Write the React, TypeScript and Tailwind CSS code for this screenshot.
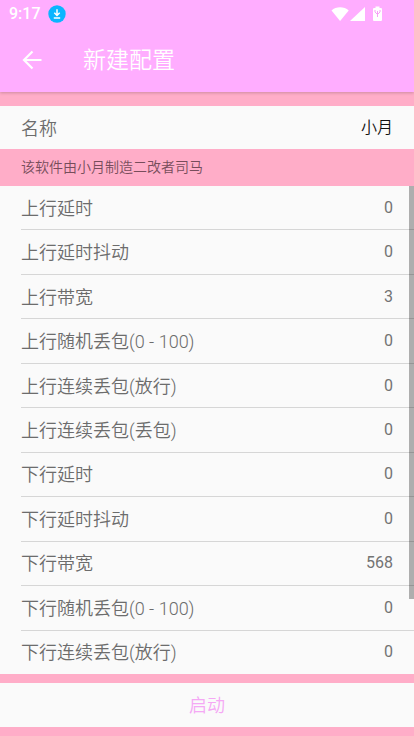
const uplinkFields = [
  { id: "up-delay", label: "上行延时", value: "0" },
  { id: "up-jitter", label: "上行延时抖动", value: "0" },
  { id: "up-bandwidth", label: "上行带宽", value: "3" },
  { id: "up-random-loss", label: "上行随机丢包(0 - 100)", value: "0" },
  { id: "up-burst-pass", label: "上行连续丢包(放行)", value: "0" },
  { id: "up-burst-drop", label: "上行连续丢包(丢包)", value: "0" },
];

const downlinkFields = [
  { id: "down-delay", label: "下行延时", value: "0" },
  { id: "down-jitter", label: "下行延时抖动", value: "0" },
  { id: "down-bandwidth", label: "下行带宽", value: "568" },
  { id: "down-random-loss", label: "下行随机丢包(0 - 100)", value: "0" },
  { id: "down-burst-pass", label: "下行连续丢包(放行)", value: "0" },
];

function StatusBar() {
  return (
    <div className="flex h-7 items-center pl-[9px] pr-8 text-white">
      <span className="text-base font-medium leading-7">9:17</span>
      <svg className="ml-[7px] h-[18px] w-[18px]" viewBox="0 0 18 18" aria-hidden="true">
        <circle cx="9" cy="9" r="8.7" fill="#0bb5ff" />
        <path d="M9 4.3v6.2M6.3 7.8 9 10.5l2.7-2.7M5.8 13h6.4" fill="none" stroke="#fff" strokeWidth="1.5" />
      </svg>
      <svg className="ml-auto h-4 w-[52px]" viewBox="0 0 52 16" fill="#fff" aria-hidden="true">
        <path d="M1.5 4.6C6 .2 14.2.2 18.7 4.6L10.1 15z" />
        <path d="M35 1v14H20z" />
        <path d="M45.5.5h4v1.4h1.2c.8 0 1.3.5 1.3 1.3v10.6c0 .8-.5 1.2-1.3 1.2h-6.4c-.8 0-1.3-.4-1.3-1.2V3.2c0-.8.5-1.3 1.3-1.3h1.2z" />
        <path
          d="M47.5 5v6M45 4v2l2.5 2.5M50 4v2l-2.5 2.5"
          fill="none"
          stroke="#f7a0f7"
          strokeWidth="1"
        />
      </svg>
    </div>
  );
}

function Field({ id, label, value }: { id: string; label: string; value: string }) {
  return (
    <div className="flex min-h-10 flex-1 items-center border-b border-[#d6d6d6] pr-[21px] last:border-b-0">
      <label htmlFor={id} className="shrink-0 pt-0.5 text-lg leading-6 text-[#6c6c6c]">
        {label}
      </label>
      <input
        id={id}
        defaultValue={value}
        inputMode="numeric"
        className="min-w-0 flex-1 bg-transparent text-right text-base font-normal leading-6 text-[#737373] outline-none"
      />
    </div>
  );
}

export default function App() {
  return (
    <div className="flex min-h-screen flex-col bg-[#ffadc8] font-['Roboto','Noto_Sans_CJK_SC',sans-serif] font-[350]">
      <header className="bg-[#ffadff] shadow-[0_1px_3px_rgba(0,0,0,0.2)]">
        <StatusBar />
        <div className="flex h-16 items-center pl-5">
          <button type="button" aria-label="返回" className="text-white">
            <svg className="h-6 w-6" viewBox="0 0 24 24" fill="none" stroke="currentColor" strokeWidth="2.2" aria-hidden="true">
              <path d="M21.5 12H4M12.5 3.5 4 12l8.5 8.5" />
            </svg>
          </button>
          <h1 className="ml-[39px] pt-0.5 text-[23px] leading-8 text-white">新建配置</h1>
        </div>
      </header>

      <main className="flex flex-1 flex-col pt-3.5">
        <div className="flex h-[43px] items-center bg-[#fafafa] px-[21px]">
          <label htmlFor="name" className="shrink-0 pt-0.5 text-lg leading-6 text-[#6c6c6c]">
            名称
          </label>
          <input
            id="name"
            defaultValue="小月"
            className="min-w-0 flex-1 bg-transparent text-right text-base leading-6 text-[#111111] outline-none"
          />
        </div>

        <p className="px-[21px] py-2 text-sm leading-[21px] text-[#774d5b]">该软件由小月制造二改者司马</p>

        <div className="relative flex flex-1 flex-col bg-[#fafafa] pl-[21px]">
          <div className="flex flex-1 flex-col">
            {[...uplinkFields, ...downlinkFields].map((field) => (
              <Field key={field.id} {...field} />
            ))}
          </div>
          {/* scroll thumb */}
          <div className="absolute right-0 top-0 h-11/13 w-[5px] bg-black/30" />
        </div>
      </main>

      <footer className="py-[9px]">
        <button type="button" className="h-11 w-full bg-[#fafafa] pt-0.5 text-lg leading-6 text-[#f5a8f5]">
          启动
        </button>
      </footer>
    </div>
  );
}
